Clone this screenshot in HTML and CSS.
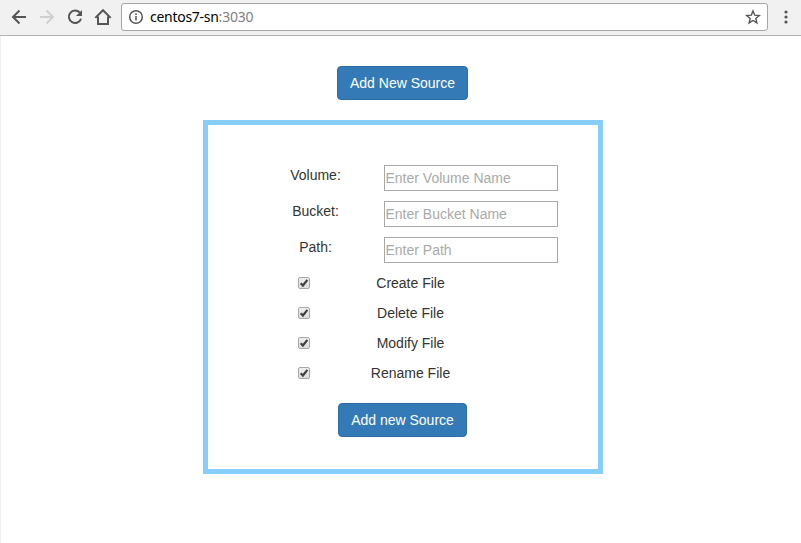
FILE: index.html
```html
<!DOCTYPE html>
<html lang="en">
<head>
<meta charset="utf-8">
<title>centos7-sn:3030</title>
<link rel="stylesheet" href="styles.css">
</head>
<body>
<header class="toolbar">
  <nav class="nav">
    <svg class="icon" viewBox="0 0 18 18"><path d="M16 9H3M9.500 2.500L3 9L9.500 15.500"/></svg>
    <svg class="icon disabled" viewBox="0 0 18 18"><path d="M2 9h13M8.500 2.500L15 9L8.500 15.500"/></svg>
    <svg class="icon" viewBox="0 0 18 18"><path d="M13.800 4.700A6.200 6.200 0 1 0 15 10.700"/><path class="solid" d="M16 2v6h-6z"/></svg>
    <svg class="icon" viewBox="0 0 18 18"><path d="M1.300 9.900L9 2.200l7.700 7.700M4 8.500V16h10V8.500"/></svg>
  </nav>
  <div class="address">
    <svg class="info" viewBox="0 0 16 16"><circle cx="8" cy="8" r="6.300"/><path d="M8 7v4.500M8 4.300v1.700"/></svg>
    <span class="url"><span class="host">centos7-sn</span><span class="port">:3030</span></span>
    <svg class="star" viewBox="0 0 16 16"><path d="M8 1.900l1.700 4.300 4.600.3-3.500 2.900 1.100 4.500L8 11.500l-3.900 2.400 1.100-4.500-3.500-2.900 4.600-.3z"/></svg>
  </div>
  <svg class="menu" viewBox="0 0 4 14"><circle cx="2" cy="2" r="1.600"/><circle cx="2" cy="7" r="1.600"/><circle cx="2" cy="12" r="1.600"/></svg>
</header>
<main class="page">
  <button class="btn add">Add New Source</button>
  <form class="panel">
    <div class="field"><label for="volume">Volume:</label><input id="volume" type="text" placeholder="Enter Volume Name"></div>
    <div class="field"><label for="bucket">Bucket:</label><input id="bucket" type="text" placeholder="Enter Bucket Name"></div>
    <div class="field"><label for="path">Path:</label><input id="path" type="text" placeholder="Enter Path"></div>
    <div class="option"><span class="check"><svg viewBox="0 0 12 12"><path d="M2.700 6.300L4.900 8.500L9.400 2.900"/></svg></span><span>Create File</span></div>
    <div class="option"><span class="check"><svg viewBox="0 0 12 12"><path d="M2.700 6.300L4.900 8.500L9.400 2.900"/></svg></span><span>Delete File</span></div>
    <div class="option"><span class="check"><svg viewBox="0 0 12 12"><path d="M2.700 6.300L4.900 8.500L9.400 2.900"/></svg></span><span>Modify File</span></div>
    <div class="option"><span class="check"><svg viewBox="0 0 12 12"><path d="M2.700 6.300L4.900 8.500L9.400 2.900"/></svg></span><span>Rename File</span></div>
    <button type="button" class="btn submit">Add new Source</button>
  </form>
</main>
</body>
</html>
```

FILE: styles.css
```css
* { box-sizing: border-box; }
body {
  margin: 0;
  height: 543px;
  display: flex;
  flex-direction: column;
  overflow: hidden;
  background: #fff;
  color: #333;
  font: 14px/20px "Liberation Sans", Arial, sans-serif;
}
.toolbar {
  flex: none;
  height: 36px;
  display: flex;
  align-items: flex-start;
  padding: 3px 12px 0 10px;
  background: #f1f1f1;
  border-bottom: 1px solid #b4b4b4;
}
.nav { display: flex; gap: 10px; width: 111px; padding-top: 5px; }
.icon { width: 18px; height: 18px; fill: none; stroke: #555; stroke-width: 2; }
.icon .solid { fill: #555; stroke: none; }
.icon.disabled { stroke: #d0d0d0; }
.address {
  width: 647px;
  height: 28px;
  display: flex;
  align-items: center;
  padding: 0 6px;
  background: #fff;
  border: 1px solid #a6a6a6;
  border-radius: 3px;
}
.info { width: 16px; height: 16px; fill: none; stroke: #555; stroke-width: 1.5; }
.url {
  flex: 1;
  margin-left: 6px;
  font: 14px/20px "Noto Sans", "Open Sans", sans-serif;
  white-space: nowrap;
}
.host { color: #000; letter-spacing: -0.28px; }
.port { color: #808080; letter-spacing: -0.2px; }
.star { width: 16px; height: 16px; fill: none; stroke: #555; stroke-width: 1.4; }
.menu { width: 4px; height: 14px; margin: 7px 0 0 16px; fill: #555; }
.page {
  flex: 1;
  display: flex;
  flex-direction: column;
  align-items: center;
  padding: 30px 0 0 4px;
  border-left: 1px solid #f0f0f0;
}
.btn {
  flex: none;
  height: 34px;
  padding: 0;
  color: #fff;
  background: #337ab7;
  border: 1px solid #2e6da4;
  border-radius: 4px;
  font: inherit;
}
.add { width: 131px; margin-right: 1px; }
.panel {
  width: 400px;
  height: 354px;
  margin-top: 20px;
  padding: 40px 40px 0;
  border: 5px solid #87cefa;
  display: flex;
  flex-direction: column;
}
.field { flex: none; display: grid; grid-template-columns: 135px 174px; column-gap: 1px; height: 36px; align-items: start; text-align: center; }
.field input {
  width: 174px;
  height: 26px;
  padding: 1px 1px 1px 0.5px;
  border: 1px solid #a9a9a9;
  background: #fff;
  font: inherit;
}
.field input::placeholder { color: #a9a9a9; opacity: 1; }
.option { flex: none; display: grid; grid-template-columns: 112px 101px; height: 30px; align-items: start; text-align: center; }
.check {
  width: 12px;
  height: 12px;
  margin-top: 4px;
  justify-self: center;
  border: 1px solid #a8a8a8;
  border-radius: 2px;
  background: linear-gradient(#eee, #ddd);
}
.check svg { display: block; width: 12px; height: 12px; margin: -1px; fill: none; stroke: #404040; stroke-width: 2.2; }
.submit { align-self: center; width: 129px; margin: 10px 1px 0 0; }
```
